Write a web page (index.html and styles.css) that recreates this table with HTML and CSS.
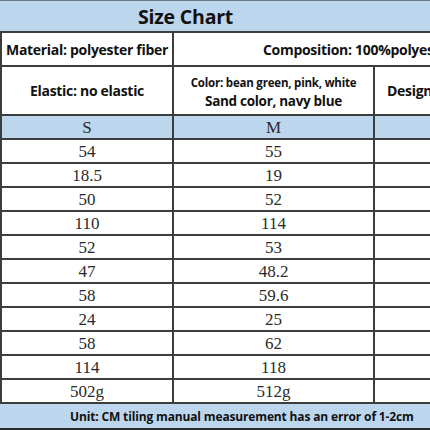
FILE: index.html
```html
<!DOCTYPE html>
<html>
<head>
<meta charset="utf-8">
<link rel="stylesheet" href="styles.css">
</head>
<body>
<div class="chart">
  <div class="row title"><span>Size Chart</span></div>
  <div class="row info mat">
    <div class="cell c1">Material: polyester fiber</div>
    <div class="cell wide">Composition: 100%polyester fiber</div>
  </div>
  <div class="row info ela">
    <div class="cell c1">Elastic: no elastic</div>
    <div class="cell c2 color"><span class="small">Color: bean green, pink, white</span><span>Sand color, navy blue</span></div>
    <div class="cell c3 design">Design</div>
  </div>
  <div class="row data head">
    <div class="cell c1">S</div>
    <div class="cell c2">M</div>
    <div class="cell c3"></div>
  </div>
  <div class="row data"><div class="cell c1">54</div><div class="cell c2">55</div><div class="cell c3"></div></div>
  <div class="row data"><div class="cell c1">18.5</div><div class="cell c2">19</div><div class="cell c3"></div></div>
  <div class="row data"><div class="cell c1">50</div><div class="cell c2">52</div><div class="cell c3"></div></div>
  <div class="row data"><div class="cell c1">110</div><div class="cell c2">114</div><div class="cell c3"></div></div>
  <div class="row data"><div class="cell c1">52</div><div class="cell c2">53</div><div class="cell c3"></div></div>
  <div class="row data"><div class="cell c1">47</div><div class="cell c2">48.2</div><div class="cell c3"></div></div>
  <div class="row data"><div class="cell c1">58</div><div class="cell c2">59.6</div><div class="cell c3"></div></div>
  <div class="row data"><div class="cell c1">24</div><div class="cell c2">25</div><div class="cell c3"></div></div>
  <div class="row data"><div class="cell c1">58</div><div class="cell c2">62</div><div class="cell c3"></div></div>
  <div class="row data"><div class="cell c1">114</div><div class="cell c2">118</div><div class="cell c3"></div></div>
  <div class="row data"><div class="cell c1">502g</div><div class="cell c2">512g</div><div class="cell c3"></div></div>
  <div class="row foot"><span>Unit: CM tiling manual measurement has an error of 1-2cm</span></div>
</div>
</body>
</html>
```
FILE: styles.css
```css
html, body {
  margin: 0;
  padding: 0;
  width: 430px;
  height: 430px;
  overflow: hidden;
  background: #fff;
}
.chart {
  width: 620px;
  display: flex;
  flex-direction: column;
  font-family: "Open Sans", "Noto Sans", sans-serif;
  color: #111;
}
.row {
  display: flex;
  box-sizing: border-box;
  border-bottom: 2px solid #3d3d3d;
}
.title {
  height: 33px;
  background: #bcd6ee;
  border-top: 1px solid #6a7a88;
  align-items: center;
  padding-left: 138px;
  font-weight: 700;
  font-size: 19.5px;
  letter-spacing: -0.2px;
}
.info, .data {
  border-left: 2px solid #3d3d3d;
}
.mat { height: 34px; }
.ela { height: 49px; }
.cell {
  box-sizing: border-box;
  display: flex;
  align-items: center;
  justify-content: center;
}
.c1 {
  width: 172px;
  border-right: 2px solid #3d3d3d;
}
.c2 {
  width: 201px;
  border-right: 2px solid #3d3d3d;
}
.c3 { width: 200px; }
.info .cell {
  font-weight: 700;
  font-size: 14px;
  letter-spacing: -0.3px;
}
.wide {
  justify-content: flex-start;
  padding-left: 89px;
  flex: 1;
}
.color {
  flex-direction: column;
  line-height: 19px;
  padding-top: 2px;
}
.info .color span {
  font-size: 13.5px;
}
.info .color .small { font-size: 11.5px; letter-spacing: -0.2px; }
.design {
  justify-content: flex-start;
  padding-left: 12px;
}
.data {
  height: 24px;
  font-family: "Liberation Serif", "DejaVu Serif", serif;
  font-size: 17px;
  color: #2a2a2a;
}
.head {
  background: #bcd6ee;
}
.data .cell { padding-top: 1px; }
.foot {
  height: 26px;
  background: #bcd6ee;
  align-items: center;
  padding-left: 70px;
  font-weight: 700;
  font-size: 12px;
  letter-spacing: -0.15px;
  border-bottom-color: #2a2a2a;
}
```
